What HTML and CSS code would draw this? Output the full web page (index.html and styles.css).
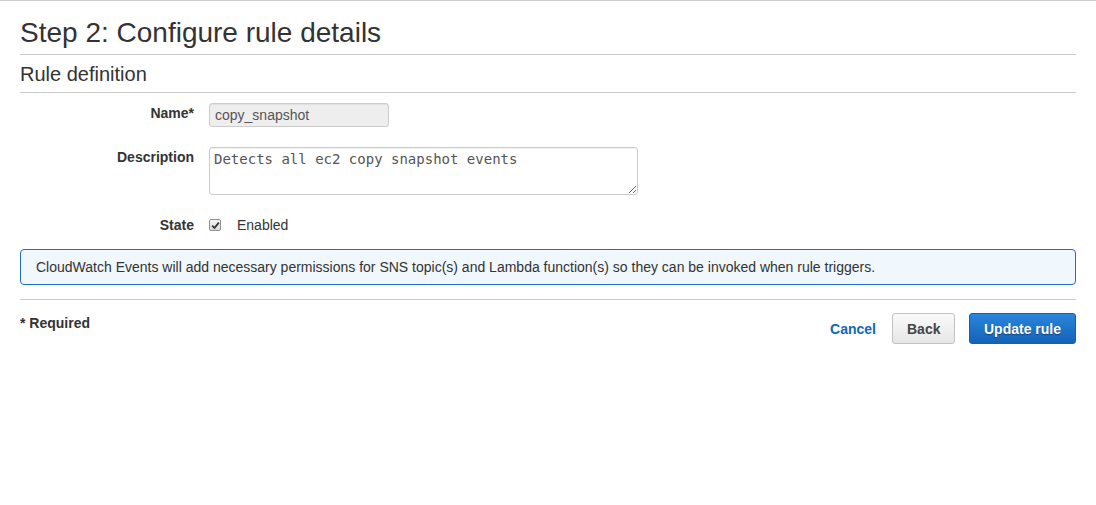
FILE: index.html
```html
<!DOCTYPE html>
<html>
<head>
<meta charset="utf-8">
<link rel="stylesheet" href="styles.css">
</head>
<body>
<div class="topline"></div>
<main class="page">
  <h1 class="title">Step 2: Configure rule details</h1>
  <h2 class="subtitle">Rule definition</h2>
  <div class="form">
    <div class="row row-name">
      <label class="label">Name*</label>
      <input class="input" type="text" value="copy_snapshot" readonly>
    </div>
    <div class="row row-desc">
      <label class="label">Description</label>
      <textarea class="textarea">Detects all ec2 copy snapshot events</textarea>
    </div>
    <div class="row row-state">
      <label class="label">State</label>
      <span class="check"><svg width="9" height="9" viewBox="0 0 9 9"><path d="M1.2 4.6 L3.5 7 L7.8 1.6" fill="none" stroke="#333" stroke-width="1.8"/></svg></span>
      <span class="check-text">Enabled</span>
    </div>
  </div>
  <div class="info">CloudWatch Events will add necessary permissions for SNS topic(s) and Lambda function(s) so they can be invoked when rule triggers.</div>
  <div class="footer">
    <div class="required">* Required</div>
    <div class="actions">
      <a class="cancel" href="#">Cancel</a>
      <button class="btn btn-back">Back</button>
      <button class="btn btn-primary">Update rule</button>
    </div>
  </div>
</main>
</body>
</html>
```
FILE: styles.css
```css
html, body { margin: 0; padding: 0; background: #fff; }
body { font-family: "Liberation Sans", Arial, sans-serif; color: #333; font-size: 14px; }
.topline { height: 1px; background: #cfcfcf; }
.page { padding: 0 20px; }
.title {
  margin: 0; padding-top: 16px; padding-bottom: 6px;
  font-size: 28px; font-weight: normal; line-height: 31px; color: #333;
  border-bottom: 1px solid #ccc;
}
.subtitle {
  margin: 0; padding-top: 8px; padding-bottom: 6px;
  font-size: 20px; font-weight: normal; line-height: 23px; color: #333;
  border-bottom: 1px solid #ccc;
}
.form { padding-top: 10px; }
.row { display: flex; align-items: flex-start; }
.label { width: 174px; text-align: right; font-weight: bold; color: #333; margin-right: 15px; }
.row-name { height: 24px; }
.row-name .label { padding-top: 2px; }
.input {
  box-sizing: border-box; width: 180px; height: 24px; margin: 0;
  padding: 0 5px; border: 1px solid #ccc; border-radius: 3px; background: #eee;
  font-family: "Liberation Sans", Arial, sans-serif; font-size: 14px; color: #555;
  box-shadow: inset 0 1px 1px rgba(0,0,0,0.06);
}
.row-desc { margin-top: 20px; }
.row-desc .label { padding-top: 2px; }
.textarea {
  box-sizing: border-box; width: 429px; height: 48px; margin: 0;
  padding: 3px 4px; border: 1px solid #ccc; border-radius: 3px; background: #fff;
  font-family: "DejaVu Sans Mono", monospace; font-size: 14px; color: #555; line-height: 17px;
  box-shadow: inset 0 1px 1px rgba(0,0,0,0.06);
}
.row-state { margin-top: 21px; align-items: center; height: 18px; }
.check {
  box-sizing: border-box; width: 12px; height: 12px; margin-left: 0;
  border: 1px solid #8f8f8f; border-radius: 2px; background: linear-gradient(#f4f4f4, #dcdcdc);
  display: flex; align-items: center; justify-content: center;
}
.check svg { display: block; }
.check-text { margin-left: 16px; color: #333; }
.info {
  margin-top: 15px; box-sizing: border-box; height: 36px;
  border: 1px solid #1f6fc5; border-radius: 4px; background: #f0f7fd;
  padding: 9px 15px; line-height: 16px; color: #333;
}
.footer {
  margin-top: 14px; border-top: 1px solid #ccc; padding-top: 13px;
  display: flex; justify-content: space-between; align-items: flex-start;
}
.required { font-weight: bold; color: #333; line-height: 16px; margin-top: 2px; }
.actions { display: flex; align-items: center; }
.cancel { color: #1166bb; font-weight: bold; text-decoration: none; margin-right: 16px; }
.btn {
  box-sizing: border-box; height: 31px; border-radius: 3px; font-family: "Liberation Sans", Arial, sans-serif;
  font-size: 14px; font-weight: bold; cursor: pointer; padding: 0 14px;
}
.btn-back {
  width: 63px; background: linear-gradient(#fafafa, #e6e6e6); border: 1px solid #c2c2c2; color: #444;
}
.btn-primary {
  margin-left: 14px; width: 107px;
  background: linear-gradient(#2a85dc, #1263b8); border: 1px solid #175faa; color: #fff;
  text-shadow: 0 1px 1px rgba(0,0,0,0.4);
}
```
